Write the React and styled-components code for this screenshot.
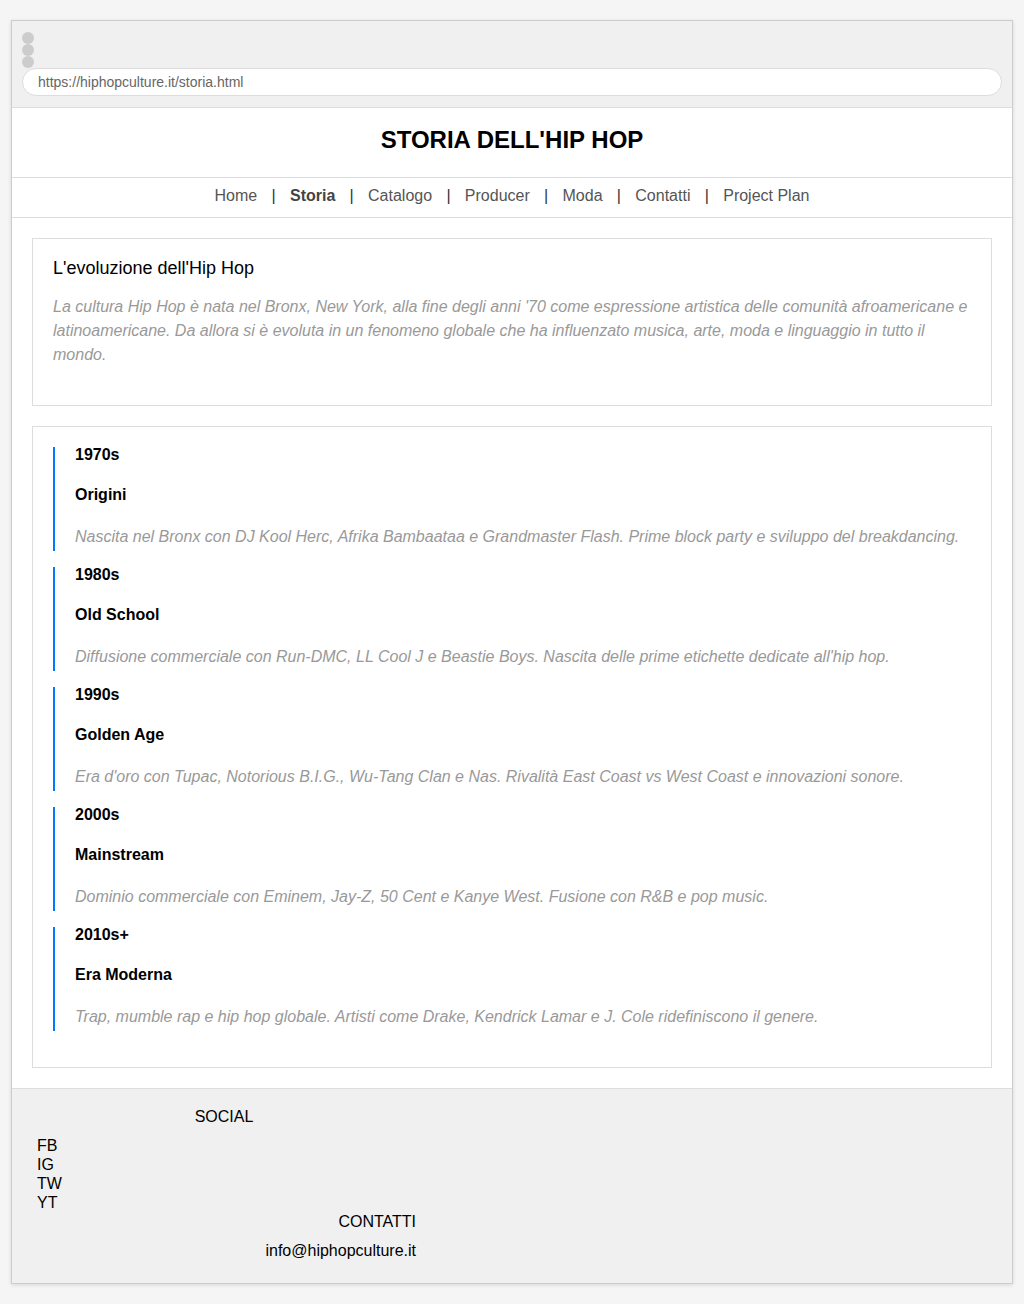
import React from "react";
import styled, { createGlobalStyle } from "styled-components";

const GlobalStyle = createGlobalStyle`
  body {
    margin: 0;
    background: #f5f5f5;
    font-family: "Liberation Sans", Arial, sans-serif;
    color: #000;
  }
`;

const Window = styled.div`
  width: 1000px;
  margin: 20px auto;
  border: 1px solid #ccc;
  box-shadow: 0 1px 4px rgba(0, 0, 0, 0.12);
  background: #fff;
`;

const BrowserBar = styled.div`
  background: #f0f0f0;
  padding: 11px 10px;
  border-bottom: 1px solid #ddd;
`;

const Dot = styled.div`
  width: 12px;
  height: 12px;
  border-radius: 50%;
  background: #ccc;
`;

const UrlBar = styled.div`
  height: 26px;
  line-height: 26px;
  border: 1px solid #ddd;
  border-radius: 14px;
  background: #fff;
  padding: 0 15px;
  font-size: 14px;
  color: #666;
`;

const Header = styled.header`
  padding: 18px 0 23px;
  text-align: center;
  border-bottom: 1px solid #ddd;
`;

const Title = styled.h1`
  margin: 0;
  font-size: 24px;
  line-height: 28px;
  font-weight: bold;
`;

const Nav = styled.nav`
  display: flex;
  justify-content: center;
  align-items: center;
  padding: 8px 0 12px;
  border-bottom: 1px solid #ddd;
  font-size: 16px;
  line-height: 19px;
  color: #555;
`;

const NavLink = styled.a`
  color: ${(p) => (p.$active ? "#444" : "#555")};
  font-weight: ${(p) => (p.$active ? "bold" : "normal")};
  text-decoration: none;
`;

const Sep = styled.span`
  margin: 0 14.3px;
  color: #333;
`;

const Main = styled.main`
  padding: 20px;
  display: flex;
  flex-direction: column;
  gap: 20px;
`;

const Card = styled.section`
  border: 1px solid #ddd;
  padding: ${(p) => p.$pad || "20px"};
`;

const CardTitle = styled.h2`
  margin: 0 0 16px;
  font-size: 18px;
  font-weight: normal;
  line-height: 21px;
`;

const Lead = styled.p`
  margin: 0 0 18px;
  font-size: 16px;
  line-height: 24px;
  font-style: italic;
  color: #999;
`;

const Item = styled.div`
  border-left: 2px solid #007bff;
  padding: 0 0 2px 20px;
  margin-bottom: 16px;
`;

const Year = styled.div`
  font-size: 16px;
  font-weight: bold;
  line-height: 14px;
  padding-top: 1px;
`;

const ItemTitle = styled.h3`
  margin: 26px 0 0;
  font-size: 16px;
  font-weight: bold;
  line-height: 14px;
`;

const ItemText = styled.p`
  margin: 23px 0 0;
  font-size: 16px;
  line-height: 24px;
  font-style: italic;
  color: #999;
`;

const Footer = styled.footer`
  background: #f0f0f0;
  border-top: 1px solid #ddd;
  padding: 18px 20px 23px;
  font-size: 16px;
  line-height: 19px;
`;

const FooterCol = styled.div`
  width: 384px;
`;

const FooterHeading = styled.div`
  text-align: ${(p) => p.$align};
`;

const SocialList = styled.ul`
  list-style: none;
  margin: 10px 0 0;
  padding: 0 0 0 5px;
`;

const Email = styled.div`
  margin-top: 10px;
  text-align: right;
`;

const links = ["Home", "Storia", "Catalogo", "Producer", "Moda", "Contatti", "Project Plan"];

const timeline = [
  {
    year: "1970s",
    title: "Origini",
    text: "Nascita nel Bronx con DJ Kool Herc, Afrika Bambaataa e Grandmaster Flash. Prime block party e sviluppo del breakdancing.",
  },
  {
    year: "1980s",
    title: "Old School",
    text: "Diffusione commerciale con Run-DMC, LL Cool J e Beastie Boys. Nascita delle prime etichette dedicate all'hip hop.",
  },
  {
    year: "1990s",
    title: "Golden Age",
    text: "Era d'oro con Tupac, Notorious B.I.G., Wu-Tang Clan e Nas. Rivalità East Coast vs West Coast e innovazioni sonore.",
  },
  {
    year: "2000s",
    title: "Mainstream",
    text: "Dominio commerciale con Eminem, Jay-Z, 50 Cent e Kanye West. Fusione con R&B e pop music.",
  },
  {
    year: "2010s+",
    title: "Era Moderna",
    text: "Trap, mumble rap e hip hop globale. Artisti come Drake, Kendrick Lamar e J. Cole ridefiniscono il genere.",
  },
];

export default function App() {
  return (
    <>
      <GlobalStyle />
      <Window>
        <BrowserBar>
          <Dot />
          <Dot />
          <Dot />
          <UrlBar>https://hiphopculture.it/storia.html</UrlBar>
        </BrowserBar>
        <Header>
          <Title>STORIA DELL'HIP HOP</Title>
        </Header>
        <Nav>
          {links.map((l, i) => (
            <React.Fragment key={l}>
              {i > 0 && <Sep>|</Sep>}
              <NavLink href="#" $active={l === "Storia"}>
                {l}
              </NavLink>
            </React.Fragment>
          ))}
        </Nav>
        <Main>
          <Card $pad="19px 20px 20px">
            <CardTitle>L'evoluzione dell'Hip Hop</CardTitle>
            <Lead>
              La cultura Hip Hop è nata nel Bronx, New York, alla fine degli anni '70 come espressione
              artistica delle comunità afroamericane e latinoamericane. Da allora si è evoluta in un
              fenomeno globale che ha influenzato musica, arte, moda e linguaggio in tutto il mondo.
            </Lead>
          </Card>
          <Card>
            {timeline.map((t) => (
              <Item key={t.year}>
                <Year>{t.year}</Year>
                <ItemTitle>{t.title}</ItemTitle>
                <ItemText>{t.text}</ItemText>
              </Item>
            ))}
          </Card>
        </Main>
        <Footer>
          <FooterCol>
            <FooterHeading $align="center">SOCIAL</FooterHeading>
            <SocialList>
              <li>FB</li>
              <li>IG</li>
              <li>TW</li>
              <li>YT</li>
            </SocialList>
            <FooterHeading $align="right">CONTATTI</FooterHeading>
            <Email>info@hiphopculture.it</Email>
          </FooterCol>
        </Footer>
      </Window>
    </>
  );
}
